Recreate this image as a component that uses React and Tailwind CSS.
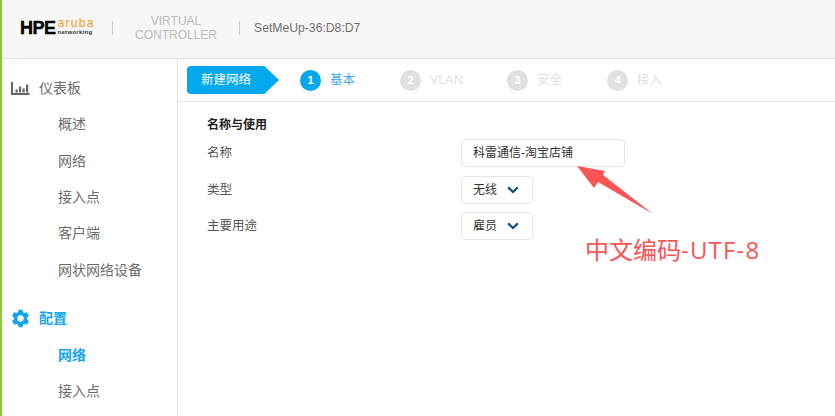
import React from 'react';

const font = { fontFamily: '"Liberation Sans", "Noto Sans CJK SC", sans-serif' };

const Step = ({ num, label, active, className }) => (
  <div className={`flex items-center gap-[9px] ${className}`}>
    <span className={`w-[21px] h-[21px] rounded-full flex items-center justify-center text-white text-[11px] font-bold ${active ? 'bg-[#00a9ec]' : 'bg-[#dfe0e4]'}`}>{num}</span>
    <span className={`text-[12.5px] ${active ? 'text-[#3ca9e8]' : 'text-[#e0e0e2]'}`}>{label}</span>
  </div>
);

const NavItem = ({ children, active }) => (
  <div className={`h-[36.4px] pl-[56px] flex items-center text-[14px] ${active ? 'text-[#14a5ec] font-bold' : 'text-[#6d6d6d]'}`}>{children}</div>
);

const Chevron = () => (
  <svg width="12" height="8" viewBox="0 0 12 8" className="ml-auto">
    <path d="M1.2 1.4 L6 6 L10.8 1.4" fill="none" stroke="#114e78" strokeWidth="2.2" />
  </svg>
);

const Field = ({ label, children }) => (
  <div className="flex items-center h-[36.5px]">
    <label className="w-[254px] pt-[1px] text-[12.5px] text-[#555]">{label}</label>
    {children}
  </div>
);

const SelectBox = ({ value }) => (
  <div className="w-[72px] h-[28px] border border-[#e6e6e6] rounded-[4px] pl-[11px] pr-[13px] flex items-center text-[12px] text-[#333]">
    {value}
    <Chevron />
  </div>
);

export default function App() {
  return (
    <div className="relative w-[835px] h-[416px] overflow-hidden bg-white border-l-2 border-[#8cc63f]" style={font}>
      <header className="h-[59px] bg-[#f7f7f7] border-b border-[#e2e2e2] pb-[2px] flex items-center">
        <div className="w-[90px] ml-[18px] -mt-[1px] flex items-center">
          <span className="text-[18px] font-bold leading-none text-black tracking-[-0.5px] [-webkit-text-stroke:0.4px_black]">HPE</span>
          <div className="ml-[2px] -mt-[3px] flex flex-col items-start">
            <span className="block h-[14px] text-[12px] leading-[14px] tracking-[1.3px] text-[#f39a26]">aruba</span>
            <span className="block -mt-[1px] h-[7px] text-[6px] leading-[7px] tracking-[0.3px] font-bold text-[#333]">networking</span>
          </div>
        </div>
        <div className="ml-[2px] w-px h-[14px] bg-[#cfcfcf]" />
        <div className="w-[126px] text-center text-[12px] leading-[14px] text-[#bcbcbc]">
          <div>VIRTUAL</div>
          <div>CONTROLLER</div>
        </div>
        <div className="w-px h-[14px] bg-[#cfcfcf]" />
        <div className="ml-[14px] text-[12.2px] text-[#707070]">SetMeUp-36:D8:D7</div>
      </header>

      <div className="flex h-[357px]">
        <aside className="w-[176px] shrink-0 border-r border-[#e2e2e2] pt-[11px]">
          <div className="h-[36.5px] pl-[9px] flex items-center gap-[9px] text-[14px] text-[#6d6d6d]">
            <svg width="19" height="13" viewBox="0 0 19 13">
              <path d="M1 0 V12 H18.5" fill="none" stroke="#666" strokeWidth="2" />
              <path d="M4.5 7.5h2.2v3H4.5z M8 4.5h2.2v6H8z M11.5 6.5h2.2v4h-2.2z M15 2.5h2.2v8H15z" fill="#666" />
            </svg>
            仪表板
          </div>
          <NavItem>概述</NavItem>
          <NavItem>网络</NavItem>
          <NavItem>接入点</NavItem>
          <NavItem>客户端</NavItem>
          <NavItem>网状网络设备</NavItem>
          <div className="mt-[11.5px] h-[37px] pl-[9px] flex items-center gap-[9px] text-[14px] font-bold text-[#14a5ec]">
            <svg width="19" height="19" viewBox="0 0 24 24" fill="#14a5ec">
              <path fillRule="evenodd" d="M9.5 1h5l.7 3.1 1.9 1.1 3-1 2.5 4.4-2.3 2.1v2.6l2.3 2.1-2.5 4.4-3-1-1.9 1.1-.7 3.1h-5l-.7-3.1-1.9-1.1-3 1L1.3 15.4l2.3-2.1v-2.6L1.3 8.6l2.5-4.4 3 1 1.9-1.1zM12 8a4 4 0 1 0 0 8 4 4 0 0 0 0-8z" />
            </svg>
            配置
          </div>
          <NavItem active>网络</NavItem>
          <NavItem>接入点</NavItem>
        </aside>

        <main className="flex-1">
          <div className="h-[43px] border-b border-[#e6e6e6] flex items-center">
            <div className="ml-[9px] w-[92px] h-[28px] bg-[#00a9ec] text-white text-[12.5px] pl-[14px] flex items-center rounded-l-[4px] [clip-path:polygon(0_0,84%_0,100%_50%,84%_100%,0_100%)]">新建网络</div>
            <Step num="1" label="基本" active className="ml-[21px] w-[100px]" />
            <Step num="2" label="VLAN" className="w-[107px]" />
            <Step num="3" label="安全" className="w-[100px]" />
            <Step num="4" label="接入" />
          </div>
          <div className="pl-[29px] pt-[14px]">
            <div className="text-[12px] font-bold text-[#222]">名称与使用</div>
            <div className="mt-[1px]">
              <Field label="名称">
                <div className="w-[164px] h-[28px] border border-[#e6e6e6] rounded-[4px] pl-[11px] flex items-center text-[12px] text-[#333]">科雷通信-淘宝店铺</div>
              </Field>
              <Field label="类型"><SelectBox value="无线" /></Field>
              <Field label="主要用途"><SelectBox value="雇员" /></Field>
            </div>
          </div>
        </main>
      </div>

      {/* red annotation over the form */}
      <svg className="absolute left-[572px] top-[163px]" width="84" height="56" viewBox="0 0 84 56">
        <path d="M3 3 L31 8 L29 12 L79 51 L24 19 L20 25 Z" fill="#fb5454" />
      </svg>
      <div className="absolute left-[583px] top-[235px] text-[24px] leading-[30px] text-[#fb5454] whitespace-nowrap" style={{ fontFamily: '"Open Sans", "Noto Sans CJK SC", sans-serif' }}>
        中文编码<span className="tracking-[1.2px]">-UTF-8</span>
      </div>
    </div>
  );
}
